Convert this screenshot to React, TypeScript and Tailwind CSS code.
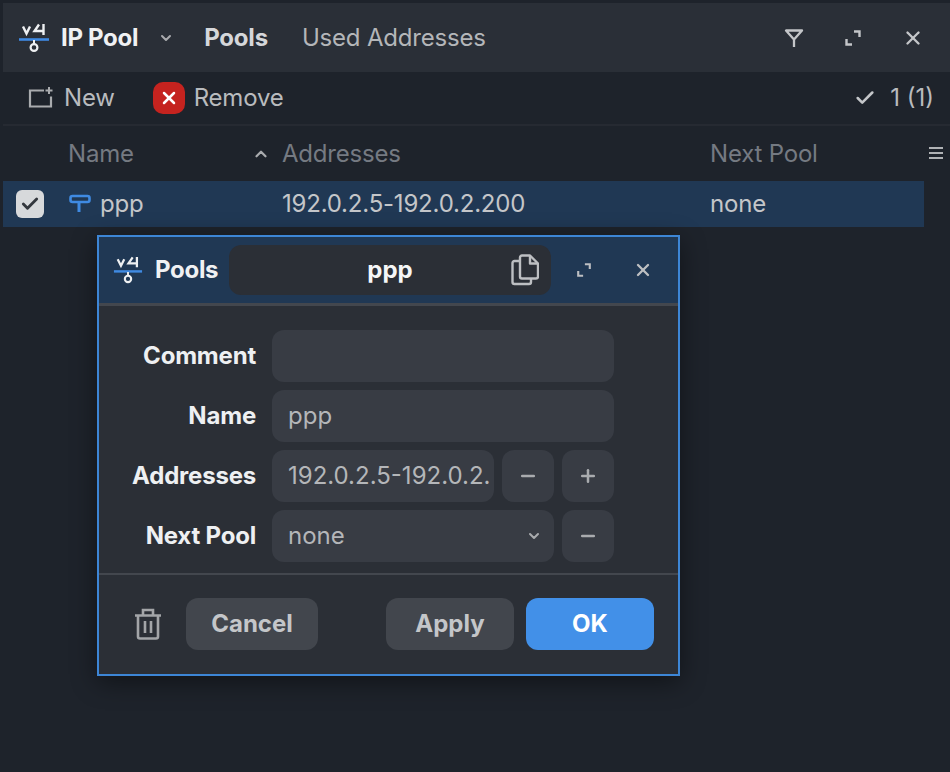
import React from 'react';
import { Check, ChevronDown, ChevronUp, Minus, Plus, X } from 'lucide-react';

const PoolLogo = ({ className }: { className: string }) => (
  <svg viewBox="0 0 32 32" className={className} fill="none">
    <path d="M5 4.5l3.5 7 3.5-7" stroke="#eef0f2" strokeWidth="2.4" />
    <path d="M21 2.5l-4.5 6.5h9M25.5 2v11" stroke="#eef0f2" strokeWidth="2.4" />
    <path d="M1 17.5h30" stroke="#3f8ae2" strokeWidth="2.6" />
    <path d="M16 18v4" stroke="#eef0f2" strokeWidth="2" />
    <circle cx="16" cy="25.5" r="3.4" stroke="#eef0f2" strokeWidth="2.2" />
  </svg>
);

const ExpandIcon = ({ className }: { className: string }) => (
  <svg viewBox="0 0 18 18" className={className} fill="none" stroke="currentColor" strokeWidth="2.4">
    <path d="M10 2.5h5.5V8M8 15.5H2.5V10" />
  </svg>
);

const FilterIcon = () => (
  <svg viewBox="0 0 20 20" className="w-5 h-5 text-[#c4c6c9]" fill="none" stroke="currentColor" strokeWidth="2.3">
    <path d="M2 2.5h16L10 11.5zM10 11v8" strokeLinejoin="round" />
  </svg>
);

const NewIcon = () => (
  <svg viewBox="0 0 26 24" className="w-[26px] h-6 text-[#a9abae]" fill="none" stroke="currentColor" strokeWidth="2.2">
    <path d="M16 4.5H2v16h21v-10" />
    <path d="M21 1v7M17.5 4.5h7" strokeWidth="2" />
  </svg>
);

const RemoveBadge = () => (
  <span className="w-8 h-8 rounded-[10px] bg-[#c5231f] flex items-center justify-center">
    <X className="w-5 h-5 text-white" strokeWidth={3} />
  </span>
);

const RollerIcon = () => (
  <svg viewBox="0 0 22 20" className="w-[22px] h-5" fill="none" stroke="#3f8ae2" strokeWidth="2.6">
    <rect x="1.5" y="2" width="19" height="6" rx="2" />
    <path d="M10 8v10" strokeWidth="3" />
  </svg>
);

const CopyIcon = () => (
  <svg viewBox="0 0 28 32" className="w-7 h-8 text-[#bdbfc2]" fill="none" stroke="currentColor" strokeWidth="2.4" strokeLinejoin="round">
    <path d="M8 7H3.5a2 2 0 0 0-2 2v19a2 2 0 0 0 2 2H18a2 2 0 0 0 2-2v-3" />
    <path d="M9 3.5a2 2 0 0 1 2-2h8l8 8v13a2 2 0 0 1-2 2H11a2 2 0 0 1-2-2z" />
    <path d="M19 2v7.5h7.5" />
  </svg>
);

const TrashIcon = () => (
  <svg viewBox="0 0 28 32" className="w-7 h-8 text-[#a3a5a8]" fill="none" stroke="currentColor" strokeWidth="2.6">
    <path d="M1 7.5h26M9 7V2h10v5M4 8v20.5a2 2 0 0 0 2 2h16a2 2 0 0 0 2-2V8M11 13v12M17 13v12" />
  </svg>
);

const SquareButton = ({ icon }: { icon: React.ReactNode }) => (
  <button className="w-[52px] h-[52px] rounded-xl bg-[#383c44] text-[#a9abae] flex items-center justify-center">
    {icon}
  </button>
);

const FormRow = ({ label, children }: { label: string; children?: React.ReactNode }) => (
  <div className="flex items-center h-[52px]">
    <label className="w-[134px] text-right font-bold text-[#eef0f2] tracking-[-0.2px] mr-4">{label}</label>
    <div className="flex gap-2 w-[342px]">{children}</div>
  </div>
);

const Field = ({ value, className, select }: { value?: string; className: string; select?: boolean }) => (
  <div className={`h-[52px] rounded-xl bg-[#383c44] pl-4 pr-3 flex items-center justify-between text-[#b4b6b9] overflow-hidden whitespace-nowrap ${className}`}>
    <span>{value}</span>
    {select && <ChevronDown className="w-4 h-4 text-[#a9abae]" strokeWidth={3} />}
  </div>
);

const ActionButton = ({ label, className }: { label: string; className: string }) => (
  <button className={`h-[52px] rounded-xl font-bold ${className}`}>{label}</button>
);

export default function App() {
  return (
    <div
      className="relative w-[950px] h-[772px] overflow-hidden bg-[#1e232b] pl-[3px] pt-[3px] text-[24px] text-[#b9bbbe]"
      style={{ fontFamily: 'Inter, "Liberation Sans", sans-serif' }}
    >
      {/* Title bar */}
      <div className="h-[69px] bg-[#2a2f37] flex items-center pl-[15px] pr-[26px]">
        <PoolLogo className="w-8 h-8 mr-[11px]" />
        <span className="font-bold text-[#f0f1f3] tracking-[-0.3px]">IP Pool</span>
        <ChevronDown className="w-4 h-4 ml-5 text-[#a9abae]" strokeWidth={3} />
        <span className="ml-[30px] font-bold text-[#d5d7da] tracking-[-0.2px]">Pools</span>
        <span className="ml-[34px] text-[#b4b6b9] tracking-[-0.2px]">Used Addresses</span>
        <div className="ml-auto flex items-center gap-10">
          <FilterIcon />
          <ExpandIcon className="w-[18px] h-[18px] text-[#c4c6c9]" />
          <X className="w-[22px] h-[22px] text-[#c4c6c9]" strokeWidth={2.6} />
        </div>
      </div>

      {/* Toolbar */}
      <div className="h-[54px] border-b-2 border-[#262a32] flex items-center pl-[25px] pr-4">
        <NewIcon />
        <span className="ml-[10px] text-[#b9bbbe] tracking-[-0.2px]">New</span>
        <span className="ml-[38px]"><RemoveBadge /></span>
        <span className="ml-[9px] text-[#b9bbbe] tracking-[-0.2px]">Remove</span>
        <div className="ml-auto flex items-center gap-[14px] text-[#b9bbbe]">
          <Check className="w-[22px] h-[22px] text-[#c4c6c9]" strokeWidth={2.8} />
          <span>1 (1)</span>
        </div>
      </div>

      {/* Table header */}
      <div className="relative h-[55px] flex items-center text-[#757a82] tracking-[-0.2px]">
        <span className="ml-[65px] w-[184px]">Name</span>
        <ChevronUp className="w-[18px] h-[18px] text-[#a9abae]" strokeWidth={3} />
        <span className="ml-[12px] w-[428px]">Addresses</span>
        <span>Next Pool</span>
        <div className="absolute right-[7px] top-[21px] w-[14px] flex flex-col gap-[3px]">
          <i className="h-[2px] bg-[#b0b2b5]" />
          <i className="h-[2px] bg-[#b0b2b5]" />
          <i className="h-[2px] bg-[#b0b2b5]" />
        </div>
      </div>

      {/* Selected row */}
      <div className="h-[46px] w-[921px] bg-[#203854] flex items-center text-[#c4c6c9] tracking-[-0.2px]">
        <span className="ml-[13px] w-7 h-7 rounded-md bg-[#d7d9db] flex items-center justify-center">
          <Check className="w-5 h-5 text-[#33373d]" strokeWidth={3.4} />
        </span>
        <span className="ml-[25px]"><RollerIcon /></span>
        <span className="ml-[9px] w-[182px]">ppp</span>
        <span className="w-[428px]">192.0.2.5-192.0.2.200</span>
        <span>none</span>
      </div>

      {/* Pool dialog */}
      <div className="absolute left-[97px] top-[235px] w-[583px] h-[441px] border-2 border-[#3d86d6] bg-[#2b2f36] shadow-[0_6px_24px_rgba(0,0,0,0.45)]">
        <div className="h-[69px] bg-[#203854] border-b-[3px] border-[#43474e] flex items-center pl-[14px]">
          <PoolLogo className="w-[30px] h-[30px] mr-[12px]" />
          <span className="font-bold text-[#f0f1f3] tracking-[-0.3px] w-[74px]">Pools</span>
          <div className="relative w-[322px] h-[50px] rounded-xl bg-[#2b2f36] flex items-center justify-center font-bold text-[#f5f6f7]">
            ppp
            <span className="absolute right-[12px] top-[9px]"><CopyIcon /></span>
          </div>
          <ExpandIcon className="ml-[25px] w-4 h-4 text-[#bdbfc2]" />
          <X className="ml-[41px] w-[20px] h-[20px] text-[#bdbfc2]" strokeWidth={2.8} />
        </div>

        <div className="pt-[24px] pl-[23px] flex flex-col gap-2 h-[269px] border-b-2 border-[#43474e]">
          <FormRow label="Comment"><Field className="w-full" /></FormRow>
          <FormRow label="Name"><Field className="w-full" value="ppp" /></FormRow>
          <FormRow label="Addresses">
            <Field className="w-[222px] shrink-0" value="192.0.2.5-192.0.2." />
            <SquareButton icon={<Minus className="w-5 h-5" strokeWidth={3} />} />
            <SquareButton icon={<Plus className="w-5 h-5" strokeWidth={3} />} />
          </FormRow>
          <FormRow label="Next Pool">
            <Field className="w-[282px] shrink-0" value="none" select />
            <SquareButton icon={<Minus className="w-5 h-5" strokeWidth={3} />} />
          </FormRow>
        </div>

        <div className="flex items-center pt-[23px] pl-[35px]">
          <TrashIcon />
          <ActionButton label="Cancel" className="ml-[24px] w-[132px] bg-[#42464d] text-[#c4c6c9]" />
          <ActionButton label="Apply" className="ml-[68px] w-[128px] bg-[#42464d] text-[#c4c6c9]" />
          <ActionButton label="OK" className="ml-3 w-[128px] bg-[#4290e8] text-white" />
        </div>
      </div>
    </div>
  );
}
